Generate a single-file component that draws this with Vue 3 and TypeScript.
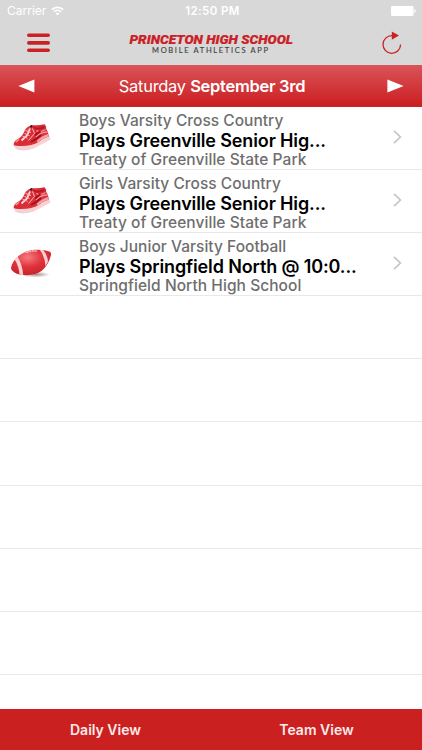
<script setup lang="ts">
interface Game {
  sport: 'shoe' | 'football'
  team: string
  title: string
  place: string
}

const games: Game[] = [
  { sport: 'shoe', team: 'Boys Varsity Cross Country', title: 'Plays Greenville Senior Hig...', place: 'Treaty of Greenville State Park' },
  { sport: 'shoe', team: 'Girls Varsity Cross Country', title: 'Plays Greenville Senior Hig...', place: 'Treaty of Greenville State Park' },
  { sport: 'football', team: 'Boys Junior Varsity Football', title: 'Plays Springfield North @ 10:0...', place: 'Springfield North High School' },
]
const emptyRows = 7
</script>

<template>
  <div class="screen">
    <header class="top">
      <div class="status">
        <div class="carrier">
          <span>Carrier</span>
          <svg class="wifi" width="13" height="10" viewBox="0 0 13 10" fill="none" stroke="#fff" stroke-width="1.6">
            <path d="M.8 3.7a8.2 8.2 0 0 1 11.4 0M2.8 5.8a5.3 5.3 0 0 1 7.4 0" />
            <path d="M6.5 9.3 4.5 7.4a2.9 2.9 0 0 1 4 0Z" fill="#fff" stroke="none" />
          </svg>
        </div>
        <span class="clock">12:50 PM</span>
        <svg class="battery" width="25" height="10" viewBox="0 0 25 10" fill="#fff">
          <rect width="22.5" height="10" rx="1.2" />
          <path d="M23.2 3.2q1.5.3 1.5 1.8t-1.5 1.8Z" />
        </svg>
      </div>
      <div class="nav">
        <svg class="menu" width="23" height="20" viewBox="0 0 23 20" stroke="#cb2026" stroke-width="3.6" stroke-linecap="round">
          <path d="M1.8 2.3h19.4M1.8 9.9h19.4M1.8 17.3h19.4" />
        </svg>
        <svg class="brand" width="172" height="28" viewBox="-2 -4 172 28">
          <text class="brand-name" x="1.500" y="11" textLength="163.500" lengthAdjust="spacingAndGlyphs">PRINCETON HIGH SCHOOL</text>
          <text class="brand-sub" x="24" y="20.300" textLength="116" lengthAdjust="spacing">MOBILE ATHLETICS APP</text>
        </svg>
        <svg class="refresh" width="20" height="24" viewBox="0 0 20 24">
          <path d="M10 4.7A8.8 8.8 0 1 0 18.6 13.6" fill="none" stroke="#cb2026" stroke-width="1.3" />
          <path d="M9.8.6 17 4.6 9.8 8.8Z" fill="#cb2026" />
        </svg>
      </div>
    </header>

    <div class="daybar">
      <svg width="17" height="14" viewBox="0 0 17 14"><path d="M.4 7 16.4.4v13.2Z" fill="#fff" /></svg>
      <div class="day">Saturday <b>September 3rd</b></div>
      <svg width="17" height="14" viewBox="0 0 17 14"><path d="M16.6 7 .4.4v13.2Z" fill="#fff" /></svg>
    </div>

    <main class="list">
      <div v-for="(game, i) in games" :key="i" class="row">
        <div class="picture">
          <svg v-if="game.sport === 'shoe'" width="42" height="32" viewBox="0 0 42 32">
            <defs>
              <linearGradient id="shoe" x1="0" y1="0" x2="1" y2="1">
                <stop offset="0" stop-color="#ea5960" /><stop offset=".45" stop-color="#da2933" /><stop offset="1" stop-color="#d5404a" />
              </linearGradient>
            </defs>
            <path d="M4.500 26.500Q12 30 22 27L39.500 18Q41.500 16.500 39 15L20 22Z" fill="#dcdada" />
            <path d="M3.500 22.500Q3.200 25.500 7 26.300Q15 28.500 24 26.300L38 18.800Q39.900 17 39.200 13.500L34 11 16 21Z" fill="#fbd0d2" />
            <path d="M3.600 22.300Q4.200 18.500 9 16.300Q12.500 14.300 14.500 9Q16.300 4.800 20 4L22.500 3.200Q28 3.800 34.500 2.300Q36.300 3.300 36.300 7Q38.500 10 39 14.500Q33.500 16 29 19.800Q21 24.800 8 24Q4 23.800 3.600 22.300Z" fill="url(#shoe)" />
            <path d="M28 20.300Q33 16 38.900 14.500L38.200 12Q32 13.500 26.500 19Z" fill="#f6a3a6" />
            <path d="M19.700 4.500Q20.500 2.300 22.500 3.100L22 5.200Q20.800 6 19.700 4.500Z" fill="#40181e" />
            <path d="M23 4Q28 7.500 34 3.800L34.500 6Q28 9 23.300 6Z" fill="#b51a23" />
            <path d="M20 6.500 17 13.500 11.500 18.500" fill="none" stroke="#ffd9da" stroke-width="1.900" />
            <path d="M15.500 8.500l5.500 2M14.500 11.500l5 2M12.500 14.300l5 2M22.500 6.500 24.500 11.500 18.500 18.500" fill="none" stroke="#ffb9bc" stroke-width="1" />
            <path d="M26 15Q30.500 10 37.500 10M26.500 8.500Q30 11 35.500 7.500" fill="none" stroke="#f49194" stroke-width="1.300" />
            <path d="M25 13.500 30.500 9M21 20Q27 17 31 13" fill="none" stroke="#a91019" stroke-width="1.800" />
            <path d="M5 20q1-2.300 5-3.500-1 2.300-3.500 4Z" fill="#f28c8f" />
          </svg>
          <svg v-else width="42" height="32" viewBox="0 0 42 32">
            <defs>
              <radialGradient id="ball" cx=".42" cy=".3" r=".75">
                <stop offset="0" stop-color="#f47c80" /><stop offset=".5" stop-color="#df333b" /><stop offset="1" stop-color="#c5202a" />
              </radialGradient>
              <radialGradient id="shade">
                <stop offset="0" stop-color="#a98a8b" /><stop offset="1" stop-color="#fff" />
              </radialGradient>
            </defs>
            <ellipse cx="26" cy="26.500" rx="14" ry="3" fill="url(#shade)" />
            <path d="M1 20Q2 13.500 9 7.500Q16 2.500 25 1.800Q34 1.200 40 3.800Q41.700 5 40.700 8Q38.500 17 31.500 23Q26 27 17 27.200Q9 27.400 4.500 24.500Q1 22 1 20Z" fill="url(#ball)" />
            <path d="M4.800 11.500 7.600 8.800Q12.500 17 13.200 27.100L9.500 26.500Q9 18.500 4.800 11.500Z" fill="#ffcfd1" />
            <path d="M29.800 1.800 33.200 2Q37.300 7 38 13.500L35.500 18Q35 9 29.800 1.800Z" fill="#ffcfd1" />
            <path d="M15.500 4.800Q21 2 27.500 3M17.500 3.500l.5 2M20 2.500l.5 2M22.500 2l.5 2M25 1.800l.4 2" fill="none" stroke="#ffd0d1" stroke-width=".7" />
          </svg>
        </div>
        <div class="copy">
          <div class="team">{{ game.team }}</div>
          <div class="title">{{ game.title }}</div>
          <div class="place">{{ game.place }}</div>
        </div>
        <svg class="chevron" width="9" height="14" viewBox="0 0 9 14"><path d="m1 .9 6.400 6.100L1 13.100" fill="none" stroke="#c5c5ca" stroke-width="1.700" /></svg>
      </div>
      <div v-for="n in emptyRows" :key="'empty' + n" class="row" />
    </main>

    <footer class="tabs">
      <div class="tab">Daily View</div>
      <div class="tab">Team View</div>
    </footer>
  </div>
</template>

<style>
body { margin: 0; }
</style>

<style scoped>
.screen { width: 422px; height: 750px; display: flex; flex-direction: column; overflow: hidden; background: #fff; font-family: Inter, "Liberation Sans", sans-serif; }
.top { height: 65px; flex: none; background: #d8d8d8; }
.status { height: 22px; display: grid; grid-template-columns: 1fr auto 1fr; align-items: center; padding: 0 6px 0 7px; box-sizing: border-box; color: #fff; font-size: 12px; line-height: 22px; }
.carrier { display: flex; align-items: center; gap: 5px; }
.clock { font-weight: 600; font-size: 11.500px; letter-spacing: .4px; margin-left: 2px; }
.battery { justify-self: end; }
.nav { height: 43px; display: grid; grid-template-columns: 1fr auto 1fr; align-items: start; padding: 0 20px 0 27px; }
.menu { margin-top: 11px; }
.brand { margin-top: 7px; margin-right: 6px; }
.brand-name { fill: #cb2026; stroke: #cb2026; stroke-width: .2px; font: italic 900 12.500px Roboto, sans-serif; }
.brand-sub { fill: #444; stroke: #444; stroke-width: .15px; font: 400 7.500px Lato, sans-serif; }
.refresh { justify-self: end; margin-top: 9px; }
.daybar { height: 42px; flex: none; box-sizing: border-box; padding: 0 18px; display: flex; align-items: center; justify-content: space-between; color: #fff; background: linear-gradient(#d9545a, #cb1f20); border-bottom: 1px solid #c22b2e; }
.day { font-size: 16.500px; letter-spacing: -.29px; position: relative; left: 1px; }
.day b { font-weight: 600; }
.list { flex: 1; min-height: 0; overflow: hidden; }
.row { height: 63.100px; box-sizing: border-box; border-bottom: 1px solid #e8e8e9; display: flex; }
.picture { width: 79px; flex: none; padding: 15px 0 0 10px; box-sizing: border-box; }
.picture svg { display: block; }
.copy { flex: 1; padding-top: 4px; white-space: nowrap; }
.team { font-size: 15.500px; line-height: 19px; letter-spacing: .03px; font-weight: 500; color: #6e6e6e; }
.title { font-size: 18px; line-height: 22px; letter-spacing: -.13px; font-weight: 600; color: #000; }
.place { font-size: 15.500px; line-height: 16px; letter-spacing: .06px; font-weight: 500; color: #6e6e6e; }
.chevron { margin: 23px 20px 0 0; }
.tabs { height: 41px; flex: none; display: grid; grid-template-columns: 1fr 1fr; background: #cb2020; color: #fbeaea; text-align: center; font-size: 14px; font-weight: 600; line-height: 41px; }
</style>
